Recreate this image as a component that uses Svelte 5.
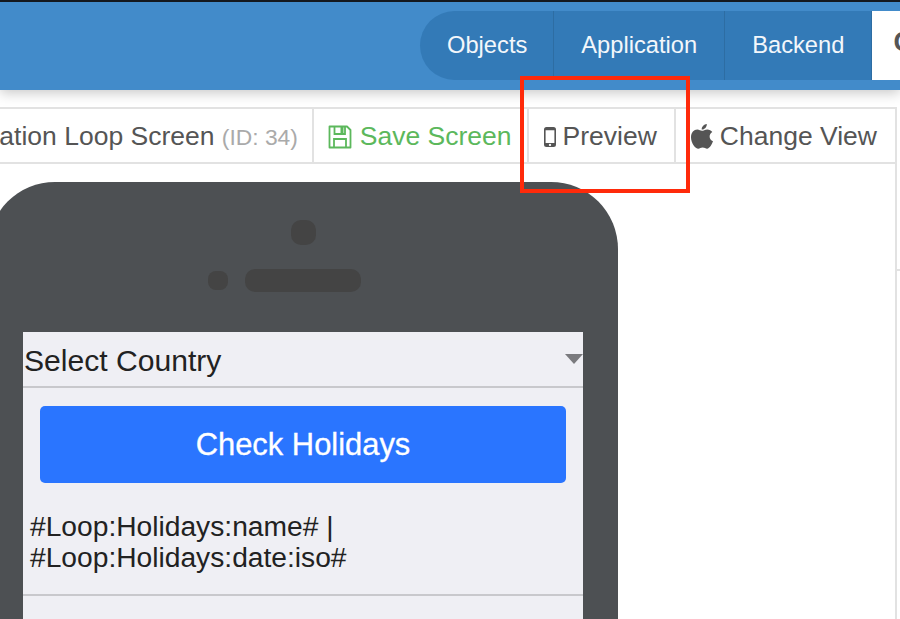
<script>
  const navItems = ['Objects', 'Application', 'Backend'];
</script>

<div class="page">
  <header class="header">
    <nav class="nav">
      {#each navItems as item}
        <span class="nav-item">{item}</span>
      {/each}
      <span class="nav-active">Code</span>
    </nav>
  </header>

  <div class="body">
    <main class="main">
      <div class="toolbar">
        <div class="tool title">Application Loop Screen <small>(ID: 34)</small></div>
        <div class="tool save">
          <svg width="24" height="24" viewBox="0 0 24 24" fill="none" stroke="currentColor" stroke-width="1.800">
            <path d="M1.500 1.500h17.500l3.500 3.500v17.500H1.500z" stroke-linejoin="round" />
            <path d="M6.500 1.500v7.500h10.500V1.500" />
            <path d="M6 22.500v-8.500h12v8.500" />
            <rect x="12.500" y="2" width="3" height="6" fill="currentColor" stroke="none" />
          </svg>
          <span>Save Screen</span>
        </div>
        <div class="tool">
          <svg width="12" height="20" viewBox="0 0 12 20">
            <path fill="currentColor" fill-rule="evenodd" d="M2.500 0h7A2.500 2.500 0 0 1 12 2.500v15A2.500 2.500 0 0 1 9.500 20h-7A2.500 2.500 0 0 1 0 17.500v-15A2.500 2.500 0 0 1 2.500 0zM1.600 3.200v12.800h8.800V3.200zM6 16.800a1.100 1.100 0 1 0 .01 0z" />
          </svg>
          <span>Preview</span>
        </div>
        <div class="tool last">
          <svg width="22" height="25" viewBox="0 0 22 25">
            <path fill="currentColor" d="M11 6.800c1.300 0 3-1.400 5.300-1.400 2 0 3.900.9 5 2.600-3.900 2.200-3.300 7.800.7 9.300-.9 2.600-3.400 7.400-5.900 7.400-1.600 0-2.400-1.100-4.400-1.100s-2.900 1.100-4.400 1.100C4.300 24.700 0 18.900 0 13.400 0 8.500 3.100 5.500 6.200 5.500c2 0 3.500 1.300 4.800 1.300z" />
            <path fill="currentColor" d="M10.700 5.600C10.500 2.800 13 .3 15.800 0c.3 3-2.400 5.700-5.100 5.600z" />
          </svg>
          <span>Change View</span>
        </div>
      </div>

      <div class="phone">
        <div class="camera"></div>
        <div class="speaker"><span class="sensor"></span></div>
        <div class="screen">
          <div class="select">Select Country <span class="caret"></span></div>
          <div class="btn-wrap"><div class="btn">Check Holidays</div></div>
          <div class="loop">#Loop:Holidays:name# |<br />#Loop:Holidays:date:iso#</div>
        </div>
      </div>
    </main>
    <aside class="side"><div class="side-top"></div></aside>
  </div>

  <div class="highlight"></div>
</div>

<style>
  :global(body) {
    margin: 0;
    background: #fff;
  }
  .page {
    position: relative;
    width: 900px;
    height: 619px;
    overflow: hidden;
    display: flex;
    flex-direction: column;
    font-family: "Liberation Sans", Arial, sans-serif;
    background: #fff;
  }
  .header {
    flex: none;
    height: 88px;
    border-top: 2px solid #14181e;
    background: #428bca;
    box-shadow: 0 3px 12px rgba(0, 0, 0, 0.22);
    display: flex;
    justify-content: flex-end;
    position: relative;
    z-index: 1;
  }
  .nav {
    margin-top: 9px;
    height: 69px;
    width: 480px;
    display: flex;
    background: #337ab7;
    border-radius: 35px 0 0 35px;
    font-size: 23.7px;
    color: #f3f7fb;
    overflow: hidden;
  }
  .nav-item {
    display: flex;
    align-items: center;
    padding: 0 27px 1px;
    border-right: 1px solid #2d6da3;
    white-space: nowrap;
  }
  .nav-item:first-child {
    padding-right: 26px;
  }
  .nav-active {
    flex: 1;
    background: #fff;
    color: #555;
    display: flex;
    align-items: center;
    padding: 0 0 6px 21px;
    white-space: nowrap;
    font-weight: bold;
    font-size: 27px;
  }
  .body {
    flex: 1;
    display: flex;
    min-height: 0;
    padding-top: 17px;
  }
  .main {
    flex: 1;
    min-width: 0;
    overflow: hidden;
  }
  .toolbar {
    height: 53px;
    display: flex;
    justify-content: flex-end;
    border-top: 2px solid #e2e2e2;
    border-bottom: 2px solid #e2e2e2;
    color: #555;
    font-size: 26.5px;
  }
  .tool {
    flex: none;
    display: flex;
    align-items: center;
    gap: 7px;
    padding: 2px 17px 0 15px;
    border-left: 2px solid #e2e2e2;
    white-space: nowrap;
  }
  .tool.last {
    padding-right: 18px;
  }
  .title {
    display: block;
    border-left: 0;
    padding: 0 14px 0 0;
    line-height: 54px;
  }
  .title small {
    font-size: 22.8px;
    color: #aaa;
  }
  .save {
    color: #5cb85c;
    gap: 8px;
    padding-left: 14px;
    padding-right: 15px;
  }
  .phone {
    margin: 18px 0 0 -12px;
    width: 630px;
    height: 500px;
    background: #4d5053;
    border-radius: 67px 67px 0 0;
    padding-top: 38px;
    box-sizing: border-box;
  }
  .camera {
    width: 25px;
    height: 25px;
    margin: 0 auto;
    border-radius: 10px;
    background: #444;
  }
  .speaker {
    position: relative;
    width: 116px;
    height: 23px;
    margin: 24px auto 0;
    border-radius: 10px;
    background: #444;
  }
  .sensor {
    position: absolute;
    left: -37px;
    top: 2px;
    width: 20px;
    height: 19px;
    border-radius: 8px;
    background: #444;
  }
  .screen {
    width: 560px;
    margin: 40px auto 0;
    height: 300px;
    background: #efeff4;
    color: #222;
  }
  .select {
    position: relative;
    height: 54px;
    padding-left: 1px;
    line-height: 58px;
    font-size: 30.1px;
    border-bottom: 2px solid #c8c8cc;
  }
  .caret {
    position: absolute;
    right: 0;
    top: 22px;
    width: 0;
    height: 0;
    border-left: 9px solid transparent;
    border-right: 9px solid transparent;
    border-top: 10px solid #7a7a7e;
  }
  .btn-wrap {
    padding: 18px 17px 0;
  }
  .btn {
    height: 77px;
    line-height: 77px;
    text-align: center;
    color: #fff;
    font-size: 30.9px;
    background: #2a75ff;
    border-radius: 5px;
    -webkit-text-stroke: 0.3px #fff;
  }
  .loop {
    margin-top: 28px;
    padding: 0 7px 21px;
    font-size: 28.2px;
    line-height: 31px;
    border-bottom: 2px solid #c8c8cc;
  }
  .side {
    flex: none;
    width: 3px;
    border-left: 2px solid #e2e2e2;
  }
  .side-top {
    height: 162px;
    border-bottom: 2px solid #e2e2e2;
  }
  .highlight {
    position: absolute;
    left: 520px;
    top: 76px;
    width: 170px;
    height: 117px;
    box-sizing: border-box;
    border: 4.500px solid #ff2a0a;
    z-index: 2;
  }
</style>
